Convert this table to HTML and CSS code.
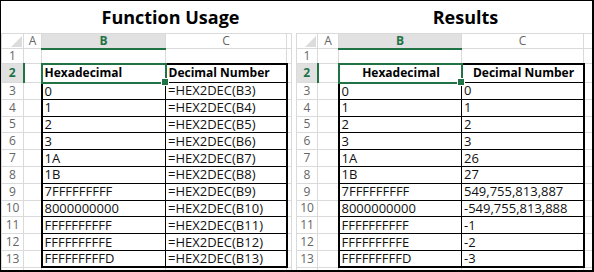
FILE: index.html
```html
<!DOCTYPE html>
<html lang="en">
<head>
    <meta charset="UTF-8">
    <title>HEX2DEC Function</title>
    <link rel="stylesheet" href="styles.css">
</head>
<body>
<div class="frame">

    <!-- Left sheet: formulas -->
    <div class="panel panel-left">
        <div class="title">Function Usage</div>
        <table class="sheet">
            <colgroup>
                <col class="c-hdr"><col class="c-a"><col class="c-b"><col class="c-c"><col class="c-x">
            </colgroup>
            <tr class="r-colhdr">
                <th class="corner"><svg width="11" height="11" viewBox="0 0 11 11"><polygon points="11,0 11,11 0,11" fill="#dcdcdc"/></svg></th>
                <th class="colhdr">A</th>
                <th class="colhdr sel">B</th>
                <th class="colhdr">C</th>
                <th class="colhdr"></th>
            </tr>
            <tr class="r-first"><th class="rowhdr">1</th><td></td><td></td><td></td><td></td></tr>
            <tr class="r-head"><th class="rowhdr sel">2</th><td></td><td class="d head active">Hexadecimal</td><td class="d head edge-t edge-r">Decimal Number</td><td></td></tr>
            <tr class="r"><th class="rowhdr">3</th><td></td><td class="d edge-l">0</td><td class="d edge-r">=HEX2DEC(B3)</td><td></td></tr>
            <tr class="r"><th class="rowhdr">4</th><td></td><td class="d edge-l">1</td><td class="d edge-r">=HEX2DEC(B4)</td><td></td></tr>
            <tr class="r"><th class="rowhdr">5</th><td></td><td class="d edge-l">2</td><td class="d edge-r">=HEX2DEC(B5)</td><td></td></tr>
            <tr class="r"><th class="rowhdr">6</th><td></td><td class="d edge-l">3</td><td class="d edge-r">=HEX2DEC(B6)</td><td></td></tr>
            <tr class="r"><th class="rowhdr">7</th><td></td><td class="d edge-l">1A</td><td class="d edge-r">=HEX2DEC(B7)</td><td></td></tr>
            <tr class="r"><th class="rowhdr">8</th><td></td><td class="d edge-l">1B</td><td class="d edge-r">=HEX2DEC(B8)</td><td></td></tr>
            <tr class="r"><th class="rowhdr">9</th><td></td><td class="d edge-l">7FFFFFFFFF</td><td class="d edge-r">=HEX2DEC(B9)</td><td></td></tr>
            <tr class="r"><th class="rowhdr">10</th><td></td><td class="d edge-l">8000000000</td><td class="d edge-r">=HEX2DEC(B10)</td><td></td></tr>
            <tr class="r"><th class="rowhdr">11</th><td></td><td class="d edge-l">FFFFFFFFFF</td><td class="d edge-r">=HEX2DEC(B11)</td><td></td></tr>
            <tr class="r"><th class="rowhdr">12</th><td></td><td class="d edge-l">FFFFFFFFFE</td><td class="d edge-r">=HEX2DEC(B12)</td><td></td></tr>
            <tr class="r"><th class="rowhdr">13</th><td></td><td class="d edge-l edge-b">FFFFFFFFFD</td><td class="d edge-r edge-b">=HEX2DEC(B13)</td><td></td></tr>
            <tr class="r"><th class="rowhdr">14</th><td></td><td></td><td></td><td></td></tr>
        </table>
    </div>

    <!-- Right sheet: results -->
    <div class="panel panel-right">
        <div class="title">Results</div>
        <table class="sheet">
            <colgroup>
                <col class="c-hdr"><col class="c-a"><col class="c-b"><col class="c-c"><col class="c-x">
            </colgroup>
            <tr class="r-colhdr">
                <th class="corner"><svg width="11" height="11" viewBox="0 0 11 11"><polygon points="11,0 11,11 0,11" fill="#dcdcdc"/></svg></th>
                <th class="colhdr">A</th>
                <th class="colhdr sel">B</th>
                <th class="colhdr">C</th>
                <th class="colhdr"></th>
            </tr>
            <tr class="r-first"><th class="rowhdr">1</th><td></td><td></td><td></td><td></td></tr>
            <tr class="r-head"><th class="rowhdr sel">2</th><td></td><td class="d head center active">Hexadecimal</td><td class="d head center edge-t edge-r">Decimal Number</td><td></td></tr>
            <tr class="r"><th class="rowhdr">3</th><td></td><td class="d edge-l">0</td><td class="d edge-r">0</td><td></td></tr>
            <tr class="r"><th class="rowhdr">4</th><td></td><td class="d edge-l">1</td><td class="d edge-r">1</td><td></td></tr>
            <tr class="r"><th class="rowhdr">5</th><td></td><td class="d edge-l">2</td><td class="d edge-r">2</td><td></td></tr>
            <tr class="r"><th class="rowhdr">6</th><td></td><td class="d edge-l">3</td><td class="d edge-r">3</td><td></td></tr>
            <tr class="r"><th class="rowhdr">7</th><td></td><td class="d edge-l">1A</td><td class="d edge-r">26</td><td></td></tr>
            <tr class="r"><th class="rowhdr">8</th><td></td><td class="d edge-l">1B</td><td class="d edge-r">27</td><td></td></tr>
            <tr class="r"><th class="rowhdr">9</th><td></td><td class="d edge-l">7FFFFFFFFF</td><td class="d edge-r">549,755,813,887</td><td></td></tr>
            <tr class="r"><th class="rowhdr">10</th><td></td><td class="d edge-l">8000000000</td><td class="d edge-r">-549,755,813,888</td><td></td></tr>
            <tr class="r"><th class="rowhdr">11</th><td></td><td class="d edge-l">FFFFFFFFFF</td><td class="d edge-r">-1</td><td></td></tr>
            <tr class="r"><th class="rowhdr">12</th><td></td><td class="d edge-l">FFFFFFFFFE</td><td class="d edge-r">-2</td><td></td></tr>
            <tr class="r"><th class="rowhdr">13</th><td></td><td class="d edge-l edge-b">FFFFFFFFFD</td><td class="d edge-r edge-b">-3</td><td></td></tr>
            <tr class="r"><th class="rowhdr">14</th><td></td><td></td><td></td><td></td></tr>
        </table>
    </div>

</div>
</body>
</html>
```

FILE: styles.css
```css
* {
    margin: 0;
    padding: 0;
    box-sizing: border-box;
}

body {
    background-color: #fff;
    font-family: 'Open Sans', sans-serif;
    color: #1a1a1a;
}

.frame {
    width: 594px;
    height: 272px;
    border-style: solid;
    border-color: #000;
    border-width: 1px 2px 2px 1px;
    display: flex;
    gap: 5px;
    overflow: hidden;
}

.panel-left {
    width: 290px;
}

.panel-right {
    width: 296px;
}

.title {
    height: 32px;
    margin-left: 41px;
    width: 245px;
    padding-left: 12px;
    text-align: center;
    font-weight: 700;
    font-size: 18px;
    line-height: 32px;
    color: #000;
}

.sheet {
    border-collapse: collapse;
    table-layout: fixed;
    width: 100%;
}

.panel-left .c-hdr { width: 22px; }
.panel-left .c-a { width: 18px; }
.panel-left .c-b { width: 124px; }
.panel-left .c-c { width: 121px; }
.panel-left .c-x { width: 5px; }

.panel-right .c-hdr { width: 21px; }
.panel-right .c-a { width: 21px; }
.panel-right .c-b { width: 123px; }
.panel-right .c-c { width: 122px; }
.panel-right .c-x { width: 9px; }

.sheet th,
.sheet td {
    border: 1px solid #dadada;
    padding: 0 0 0 2px;
    white-space: nowrap;
    overflow: visible;
    vertical-align: middle;
    line-height: 1;
}

.r-colhdr { height: 15px; }
.r-first { height: 15px; }
.r-head { height: 19px; }
.r { height: 16.8px; }

.sheet .colhdr,
.sheet .rowhdr,
.sheet .corner {
    font-weight: 400;
    font-size: 12px;
    color: #666;
    text-align: center;
    padding: 0;
}

.sheet .corner {
    vertical-align: bottom;
    padding: 0 1px 1px 0;
}

.corner svg {
    display: block;
    margin-left: auto;
}

.sheet .colhdr.sel {
    background-color: #e1e1e1;
    color: #217346;
    font-weight: 700;
    border-bottom: 2px solid #217346;
}

.sheet .rowhdr.sel {
    background-color: #e1e1e1;
    color: #217346;
    font-weight: 700;
    border-right: 2px solid #217346;
}

/* data range B2:C13 */
.sheet .d {
    border: 1px solid #000;
    font-size: 13px;
    color: #111;
}

.sheet .d.head {
    font-weight: 700;
    font-size: 12px;
    color: #000;
}

.sheet .d.center {
    text-align: center;
}

.sheet .edge-t { border-top: 2px solid #000; }
.sheet .edge-l { border-left: 2px solid #000; }
.sheet .edge-r { border-right: 2px solid #000; }
.sheet .edge-b { border-bottom: 2px solid #000; }

.sheet .d.active {
    border: 2px solid #217346;
    position: relative;
}

.sheet .d.active::after {
    content: "";
    position: absolute;
    right: -4px;
    bottom: -4px;
    width: 6px;
    height: 6px;
    background-color: #217346;
    border: 1px solid #fff;
}
```
